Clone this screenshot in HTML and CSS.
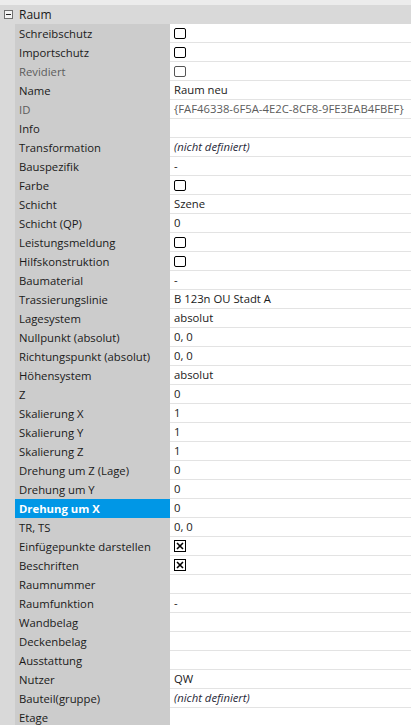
FILE: index.html
```html
<!DOCTYPE html>
<html lang="de">
<head>
  <meta charset="UTF-8" />
  <title>Eigenschaften - Raum</title>
  <link rel="stylesheet" href="styles.css">
</head>
<body>
  <div class="grid">
    <div class="top-strip"></div>
    <div class="category">
      <span class="expander"><span class="minus"></span></span>
      <span class="cat-label">Raum</span>
    </div>

    <div class="row"><div class="margin"></div><div class="name">Schreibschutz</div><div class="value"><span class="cb"></span></div></div>
    <div class="row"><div class="margin"></div><div class="name">Importschutz</div><div class="value"><span class="cb"></span></div></div>
    <div class="row disabled"><div class="margin"></div><div class="name">Revidiert</div><div class="value"><span class="cb"></span></div></div>
    <div class="row"><div class="margin"></div><div class="name">Name</div><div class="value">Raum neu</div></div>
    <div class="row disabled"><div class="margin"></div><div class="name">ID</div><div class="value">{FAF46338-6F5A-4E2C-8CF8-9FE3EAB4FBEF}</div></div>
    <div class="row"><div class="margin"></div><div class="name">Info</div><div class="value"></div></div>
    <div class="row"><div class="margin"></div><div class="name">Transformation</div><div class="value undef">(nicht definiert)</div></div>
    <div class="row"><div class="margin"></div><div class="name">Bauspezifik</div><div class="value">-</div></div>
    <div class="row"><div class="margin"></div><div class="name">Farbe</div><div class="value"><span class="cb"></span></div></div>
    <div class="row"><div class="margin"></div><div class="name">Schicht</div><div class="value">Szene</div></div>
    <div class="row"><div class="margin"></div><div class="name">Schicht (QP)</div><div class="value">0</div></div>
    <div class="row"><div class="margin"></div><div class="name">Leistungsmeldung</div><div class="value"><span class="cb"></span></div></div>
    <div class="row"><div class="margin"></div><div class="name">Hilfskonstruktion</div><div class="value"><span class="cb"></span></div></div>
    <div class="row"><div class="margin"></div><div class="name">Baumaterial</div><div class="value">-</div></div>
    <div class="row"><div class="margin"></div><div class="name">Trassierungslinie</div><div class="value">B 123n OU Stadt A</div></div>
    <div class="row"><div class="margin"></div><div class="name">Lagesystem</div><div class="value">absolut</div></div>
    <div class="row"><div class="margin"></div><div class="name">Nullpunkt (absolut)</div><div class="value">0, 0</div></div>
    <div class="row"><div class="margin"></div><div class="name">Richtungspunkt (absolut)</div><div class="value">0, 0</div></div>
    <div class="row"><div class="margin"></div><div class="name">Höhensystem</div><div class="value">absolut</div></div>
    <div class="row"><div class="margin"></div><div class="name">Z</div><div class="value">0</div></div>
    <div class="row"><div class="margin"></div><div class="name">Skalierung X</div><div class="value">1</div></div>
    <div class="row"><div class="margin"></div><div class="name">Skalierung Y</div><div class="value">1</div></div>
    <div class="row"><div class="margin"></div><div class="name">Skalierung Z</div><div class="value">1</div></div>
    <div class="row"><div class="margin"></div><div class="name">Drehung um Z (Lage)</div><div class="value">0</div></div>
    <div class="row"><div class="margin"></div><div class="name">Drehung um Y</div><div class="value">0</div></div>
    <div class="row selected"><div class="margin"></div><div class="name">Drehung um X</div><div class="value">0</div></div>
    <div class="row"><div class="margin"></div><div class="name">TR, TS</div><div class="value">0, 0</div></div>
    <div class="row"><div class="margin"></div><div class="name">Einfügepunkte darstellen</div><div class="value"><svg class="cbx" width="12" height="12" viewBox="0 0 12 12"><rect x="0.5" y="0.5" width="11" height="11" fill="#fff" stroke="#000"/><path d="M3 3 L9 9 M9 3 L3 9" stroke="#000" stroke-width="1.6"/></svg></div></div>
    <div class="row"><div class="margin"></div><div class="name">Beschriften</div><div class="value"><svg class="cbx" width="12" height="12" viewBox="0 0 12 12"><rect x="0.5" y="0.5" width="11" height="11" fill="#fff" stroke="#000"/><path d="M3 3 L9 9 M9 3 L3 9" stroke="#000" stroke-width="1.6"/></svg></div></div>
    <div class="row"><div class="margin"></div><div class="name">Raumnummer</div><div class="value"></div></div>
    <div class="row"><div class="margin"></div><div class="name">Raumfunktion</div><div class="value">-</div></div>
    <div class="row"><div class="margin"></div><div class="name">Wandbelag</div><div class="value"></div></div>
    <div class="row"><div class="margin"></div><div class="name">Deckenbelag</div><div class="value"></div></div>
    <div class="row"><div class="margin"></div><div class="name">Ausstattung</div><div class="value"></div></div>
    <div class="row"><div class="margin"></div><div class="name">Nutzer</div><div class="value">QW</div></div>
    <div class="row"><div class="margin"></div><div class="name">Bauteil(gruppe)</div><div class="value undef">(nicht definiert)</div></div>
    <div class="row"><div class="margin"></div><div class="name">Etage</div><div class="value"></div></div>
  </div>
</body>
</html>
```

FILE: styles.css
```css
body {
  margin: 0;
  font-family: "Open Sans", "Noto Sans", sans-serif;
  font-size: 11.3px;
  color: #1a1a1a;
  background-color: #ffffff;
  overflow: hidden;
}
.grid {
  width: 411px;
}
.top-strip {
  height: 5px;
  background-color: #ececec;
}
.category {
  height: 19px;
  display: flex;
  align-items: center;
  background-color: #d9d9d9;
}
.expander {
  width: 9px;
  height: 9px;
  margin-left: 4px;
  margin-right: 6px;
  border: 1px solid #6f6f6f;
  box-sizing: border-box;
  background-color: #f4f4f4;
  display: flex;
  align-items: center;
  justify-content: center;
}
.minus {
  width: 5px;
  height: 1px;
  background-color: #222;
}
.cat-label {
  line-height: 19px;
  font-size: 12px;
}
.row {
  display: grid;
  grid-template-columns: 15px 155px 1fr;
  height: 19px;
}
.margin {
  background-color: #d9d9d9;
}
.name {
  background-color: #cccccc;
  padding-left: 4px;
  line-height: 19px;
  white-space: nowrap;
  overflow: hidden;
}
.value {
  background-color: #ffffff;
  border-bottom: 1px solid #e3e3e3;
  padding-left: 4px;
  line-height: 18px;
  white-space: nowrap;
  overflow: hidden;
  display: flex;
  align-items: center;
}
.disabled .name,
.disabled .value {
  color: #5c5c5c;
}
.undef {
  font-style: italic;
  color: #2a2a3a;
}
.selected .name {
  background-color: #0097e6;
  color: #ffffff;
  font-weight: bold;
}
.cb {
  width: 12px;
  height: 11px;
  border: 1px solid #000;
  border-radius: 2px;
  box-sizing: border-box;
  display: inline-block;
}
.disabled .cb {
  border-color: #555;
}
.cbx {
  display: block;
}
```
